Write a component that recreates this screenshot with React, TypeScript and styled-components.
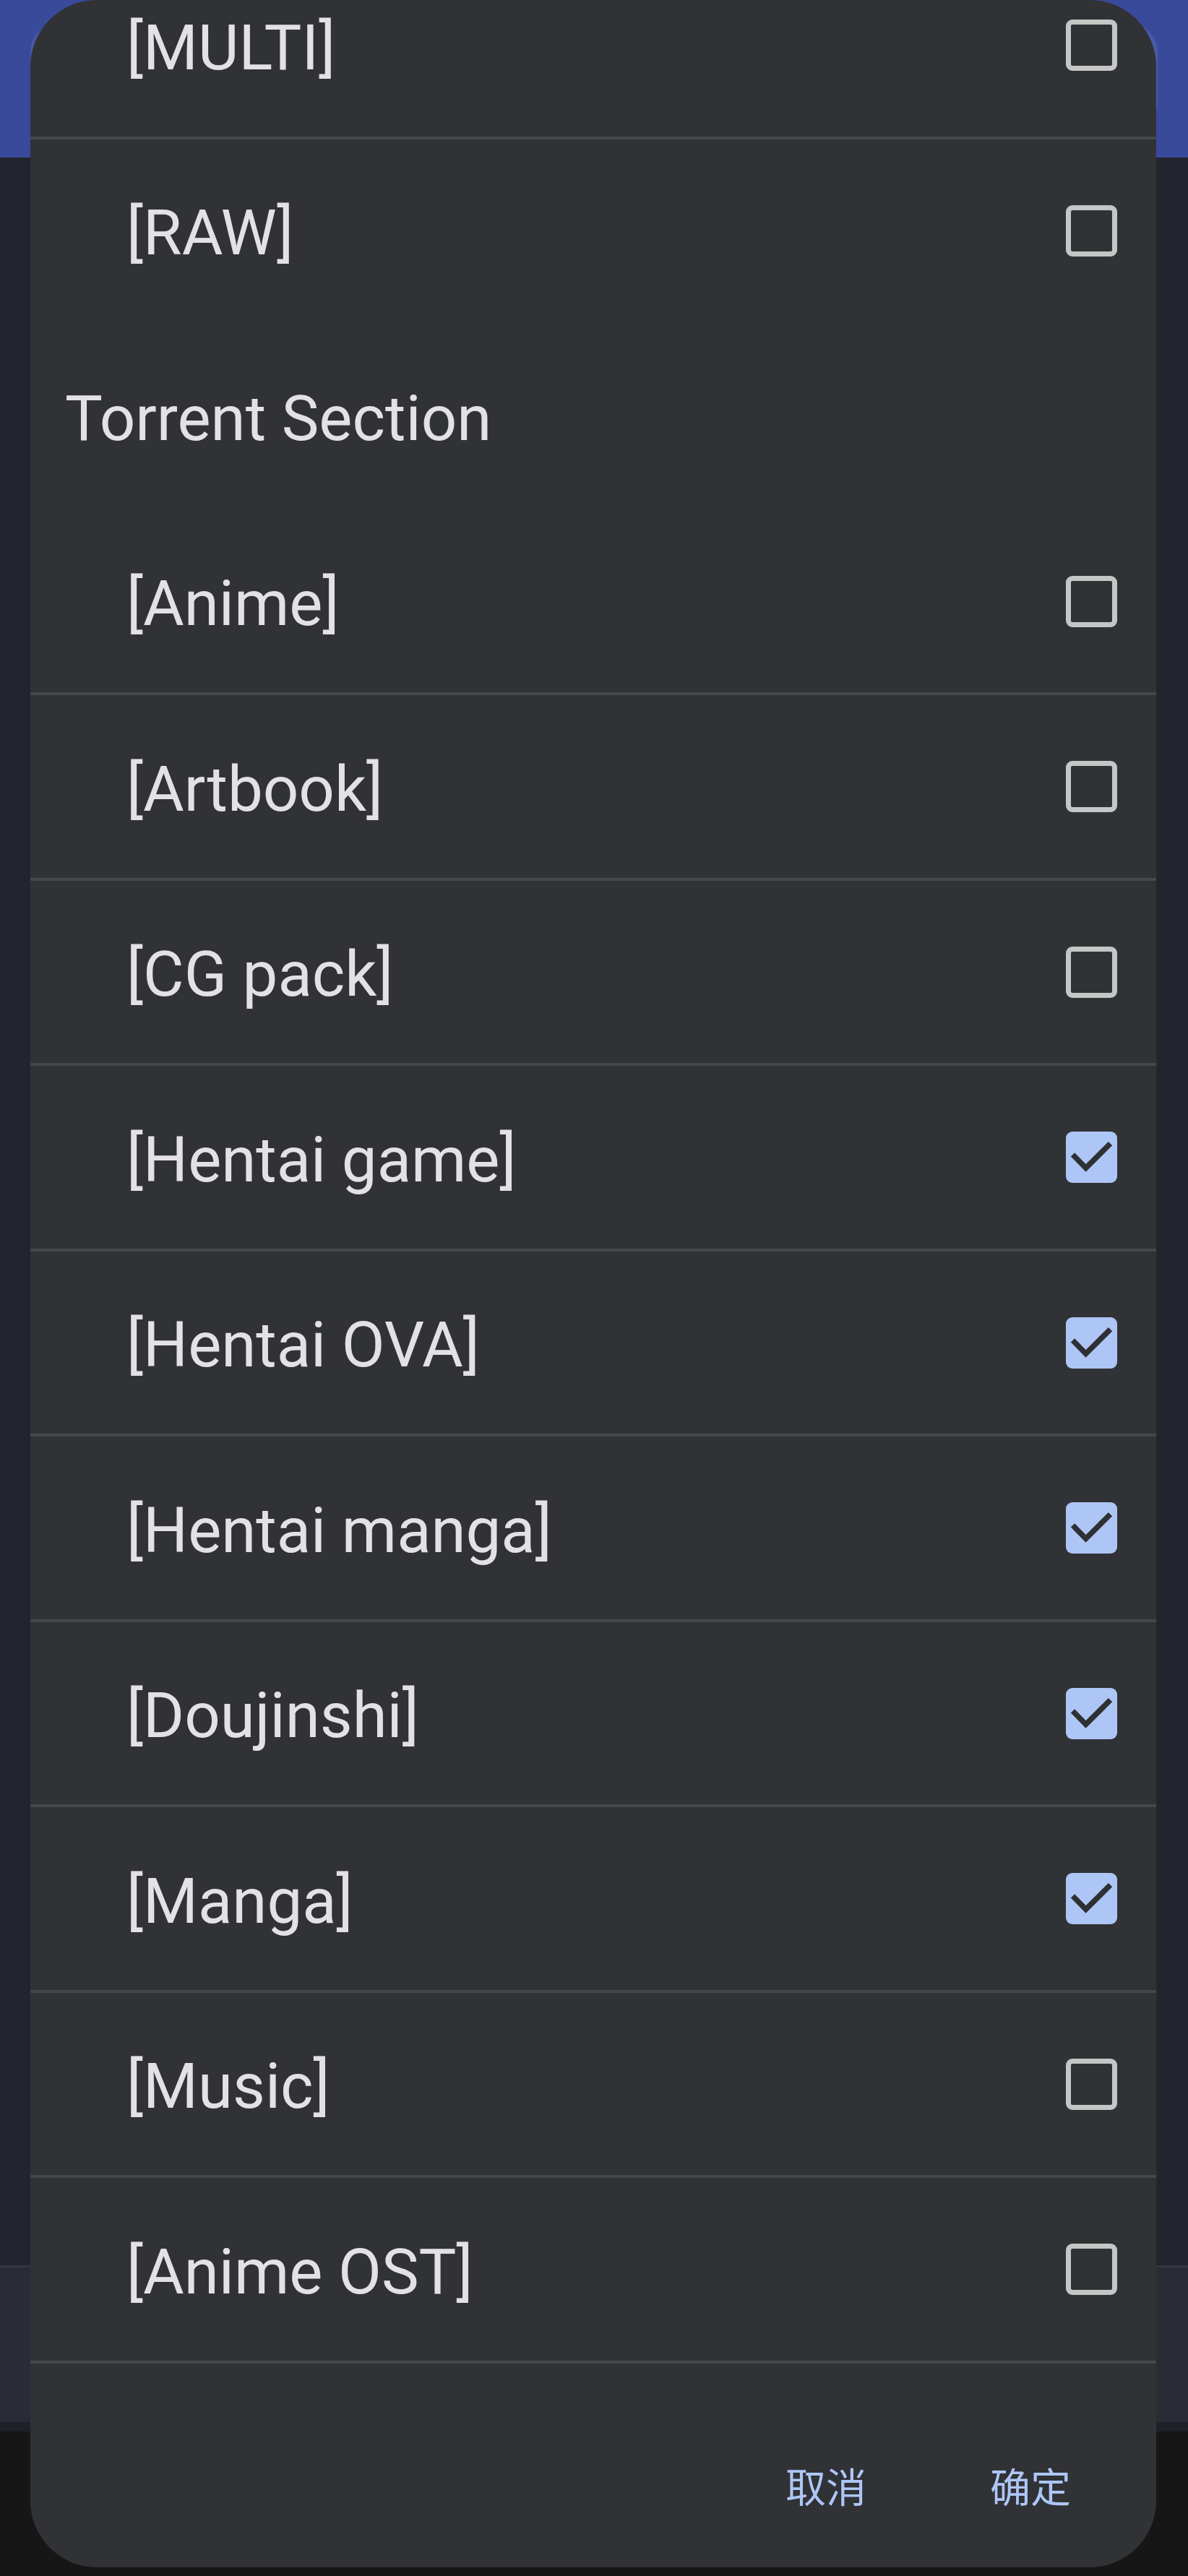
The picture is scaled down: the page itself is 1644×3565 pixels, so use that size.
import React from "react";
import styled, { createGlobalStyle } from "styled-components";

const Global = createGlobalStyle`
  html, body { margin: 0; padding: 0; background: #161616; }
  body { font-family: Roboto, "Noto Sans", "Liberation Sans", sans-serif; }
  * { box-sizing: border-box; }
`;

const Page = styled.div`
  position: relative;
  width: 1644px;
  height: 3565px;
  overflow: hidden;
  display: flex;
  flex-direction: column;
`;

const TopBar = styled.div`
  height: 218px;
  flex: 0 0 auto;
  background: #3a4a9b;
  padding: 32px 42px 0;
`;

const SearchField = styled.div`
  height: 150px;
  border-radius: 40px;
  background: #4a5aa8;
`;

const Main = styled.div`
  flex: 0 0 2917px;
  background: #22252e;
`;

const BottomPanel = styled.div`
  flex: 0 0 217px;
  background: #292c35;
  border-top: 3px solid #343741;
`;

const Band = styled.div`
  flex: 0 0 13px;
  background: #1e2129;
`;

const NavBar = styled.div`
  flex: 1 1 auto;
  background: #161616;
`;

const Dialog = styled.div`
  position: absolute;
  top: 0;
  left: 42px;
  width: 1558px;
  height: 3553px;
  border-radius: 92px;
  background: #313236;
  overflow: hidden;
  display: flex;
  flex-direction: column;
`;

const ListViewport = styled.div`
  flex: 1 1 auto;
  min-height: 0;
  overflow: hidden;
`;

const ListContent = styled.div<{ $scroll: number }>`
  display: flex;
  flex-direction: column;
  margin-top: ${(p) => -p.$scroll}px;
`;

const SectionHeader = styled.div`
  height: 260.5px;
  flex: 0 0 auto;
  display: flex;
  align-items: center;
  padding: 6px 0 0 48px;
  font-size: 87px;
  color: #e4e1e6;
  white-space: nowrap;
`;

const Row = styled.div<{ $divider: boolean }>`
  box-sizing: content-box;
  height: 252.5px;
  flex: 0 0 auto;
  display: flex;
  align-items: center;
  justify-content: space-between;
  padding: 0 54px 0 133px;
  border-bottom: ${(p) => (p.$divider ? "4px solid #46474b" : "none")};
`;

const RowLabel = styled.span`
  font-size: 87px;
  color: #e4e1e6;
  white-space: nowrap;
  padding-top: 6px;
`;

const Box = styled.span<{ $checked: boolean }>`
  width: 71px;
  height: 71px;
  flex: 0 0 71px;
  border-radius: 9px;
  display: flex;
  align-items: center;
  justify-content: center;
  border: ${(p) => (p.$checked ? "none" : "7px solid #c4c7c5")};
  background: ${(p) => (p.$checked ? "#adc6f5" : "transparent")};
`;

const Actions = styled.div`
  flex: 0 0 282px;
  display: flex;
  justify-content: flex-end;
  align-items: flex-end;
  gap: 115px;
  padding: 0 90px 55px 0;
`;

const ActionButton = styled.button`
  height: 120px;
  padding: 0 28px;
  margin: 0;
  border: none;
  background: transparent;
  color: #adc6f5;
  font-family: "Noto Sans CJK SC", "Noto Sans", sans-serif;
  font-size: 56px;
  display: flex;
  align-items: center;
  cursor: pointer;
`;

const CheckMark = () => (
  <svg width="71" height="71" viewBox="0 0 18 18">
    <polyline
      points="2.4,8.1 7,12.8 15.6,4.2"
      fill="none"
      stroke="#2f3034"
      strokeWidth="1.9"
      strokeLinecap="butt"
      strokeLinejoin="miter"
    />
  </svg>
);

const Checkbox = ({ checked }: { checked: boolean }) => (
  <Box $checked={checked}>{checked && <CheckMark />}</Box>
);

type Item = { label: string; checked: boolean; divider: boolean };

const upper: Item[] = [
  { label: "[MULTI]", checked: false, divider: true },
  { label: "[RAW]", checked: false, divider: false },
];

const torrent: Item[] = [
  { label: "[Anime]", checked: false, divider: true },
  { label: "[Artbook]", checked: false, divider: true },
  { label: "[CG pack]", checked: false, divider: true },
  { label: "[Hentai game]", checked: true, divider: true },
  { label: "[Hentai OVA]", checked: true, divider: true },
  { label: "[Hentai manga]", checked: true, divider: true },
  { label: "[Doujinshi]", checked: true, divider: true },
  { label: "[Manga]", checked: true, divider: true },
  { label: "[Music]", checked: false, divider: true },
  { label: "[Anime OST]", checked: false, divider: true },
];

const renderRow = (it: Item) => (
  <Row key={it.label} $divider={it.divider}>
    <RowLabel>{it.label}</RowLabel>
    <Checkbox checked={it.checked} />
  </Row>
);

export default function App() {
  return (
    <>
      <Global />
      <Page>
        <TopBar>
          <SearchField />
        </TopBar>
        <Main />
        <BottomPanel />
        <Band />
        <NavBar />
        <Dialog>
          <ListViewport>
            <ListContent $scroll={63.75}>
              {upper.map(renderRow)}
              <SectionHeader>Torrent Section</SectionHeader>
              {torrent.map(renderRow)}
            </ListContent>
          </ListViewport>
          <Actions>
            <ActionButton>取消</ActionButton>
            <ActionButton>确定</ActionButton>
          </Actions>
        </Dialog>
      </Page>
    </>
  );
}
